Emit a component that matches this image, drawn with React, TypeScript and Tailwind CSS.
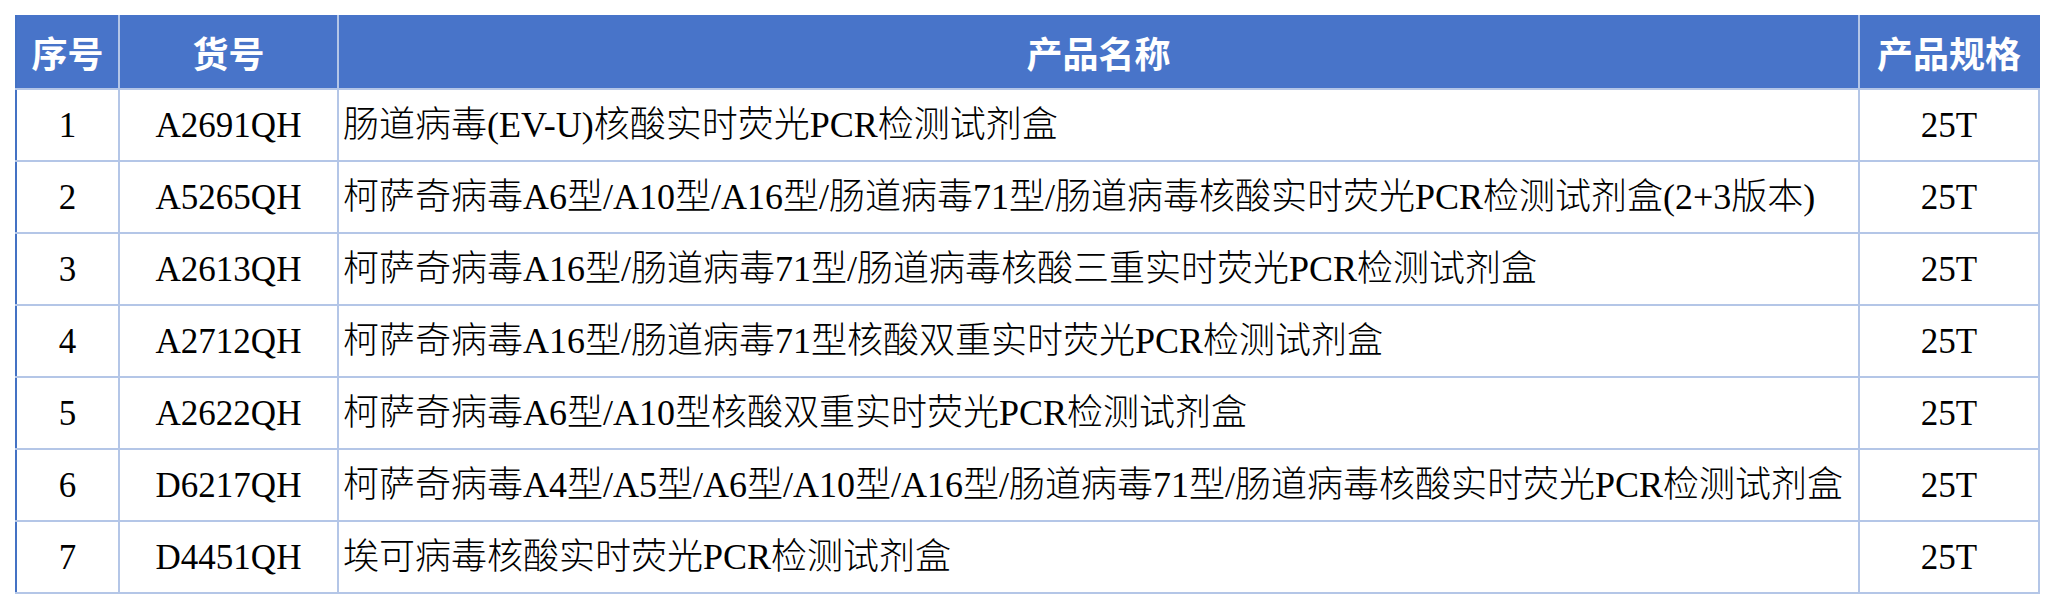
import React from "react";

const rows = [
  { no: "1", code: "A2691QH", name: "肠道病毒(EV-U)核酸实时荧光PCR检测试剂盒", spec: "25T" },
  { no: "2", code: "A5265QH", name: "柯萨奇病毒A6型/A10型/A16型/肠道病毒71型/肠道病毒核酸实时荧光PCR检测试剂盒(2+3版本)", spec: "25T" },
  { no: "3", code: "A2613QH", name: "柯萨奇病毒A16型/肠道病毒71型/肠道病毒核酸三重实时荧光PCR检测试剂盒", spec: "25T" },
  { no: "4", code: "A2712QH", name: "柯萨奇病毒A16型/肠道病毒71型核酸双重实时荧光PCR检测试剂盒", spec: "25T" },
  { no: "5", code: "A2622QH", name: "柯萨奇病毒A6型/A10型核酸双重实时荧光PCR检测试剂盒", spec: "25T" },
  { no: "6", code: "D6217QH", name: "柯萨奇病毒A4型/A5型/A6型/A10型/A16型/肠道病毒71型/肠道病毒核酸实时荧光PCR检测试剂盒", spec: "25T" },
  { no: "7", code: "D4451QH", name: "埃可病毒核酸实时荧光PCR检测试剂盒", spec: "25T" },
];

export default function App() {
  return (
    <div className="w-[2054px] h-[608px] bg-white p-[15px]">
      <table className="table-fixed border-collapse w-[2023px]">
        <colgroup>
          <col className="w-[103px]" />
          <col className="w-[219px]" />
          <col className="w-[1521px]" />
          <col className="w-[180px]" />
        </colgroup>
        <thead>
          <tr className="h-[74px] bg-[#4874c9] text-white font-bold text-[36px] [font-family:'Noto_Sans_CJK_SC',sans-serif]">
            <th className="border-2 border-t-0 border-[#b4c6e7] border-l-[#4472c4] p-0 font-bold">序号</th>
            <th className="border-2 border-t-0 border-[#b4c6e7] p-0 font-bold">货号</th>
            <th className="border-2 border-t-0 border-[#b4c6e7] p-0 font-bold">产品名称</th>
            <th className="border-2 border-t-0 border-[#b4c6e7] border-r-[#4874c9] p-0 font-bold">产品规格</th>
          </tr>
        </thead>
        <tbody className="text-black [font-family:'Liberation_Serif','Noto_Sans_CJK_SC',serif]">
          {rows.map((r) => (
            <tr key={r.no} className="h-[72px]">
              <td className="border-2 border-[#b4c6e7] border-l-[#4472c4] p-0 text-center text-[35px] leading-none">{r.no}</td>
              <td className="border-2 border-[#b4c6e7] p-0 text-center text-[35px] leading-none">{r.code}</td>
              <td className="border-2 border-[#b4c6e7] p-0 pl-[4px] text-left text-[36px] font-light leading-none whitespace-nowrap">{r.name}</td>
              <td className="border-2 border-[#b4c6e7] p-0 text-center text-[35px] leading-none">{r.spec}</td>
            </tr>
          ))}
        </tbody>
      </table>
    </div>
  );
}
